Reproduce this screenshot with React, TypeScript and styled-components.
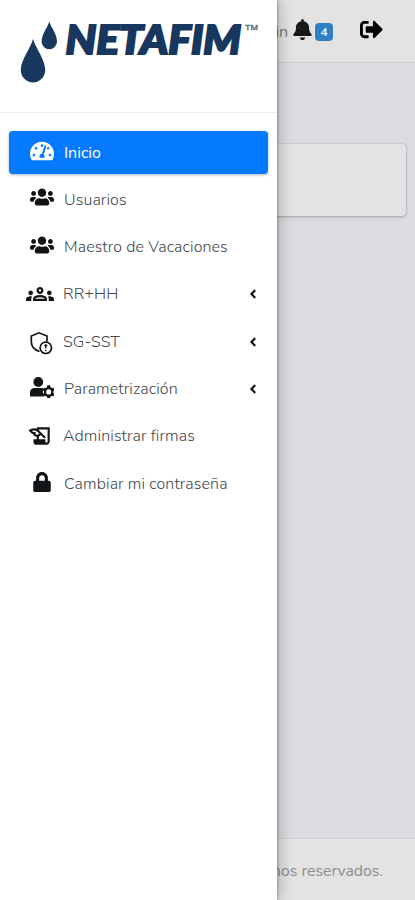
import React from 'react';
import styled, { createGlobalStyle } from 'styled-components';
import { FaTachometerAlt, FaUsers, FaLock, FaBell, FaSignOutAlt, FaAngleLeft } from 'react-icons/fa';
import { MdOutlineGroups, MdOutlineHistoryEdu } from 'react-icons/md';

const GlobalStyle = createGlobalStyle`
  * { box-sizing: border-box; }
  body { margin: 0; background: #dadce0; font-family: Nunito, "Open Sans", sans-serif; }
`;

const Page = styled.div`
  position: relative;
  height: 900px;
  overflow: hidden;
  display: flex;
  flex-direction: column;
  background: #dadce0;
`;

const TopBar = styled.header`
  height: 63px;
  flex: none;
  display: flex;
  justify-content: flex-end;
  padding: 0 32px 0 0;
  background: #e3e3e3;
  border-bottom: 1px solid #ced0d3;
`;

const UserName = styled.span`
  font-size: 16px;
  line-height: 20px;
  margin: 22px 4px 0 0;
  color: #777;
`;

const BellSlot = styled.span`
  display: flex;
  margin: 19px 2px 0 0;
  color: #161a1d;
`;

const CountBadge = styled.span`
  width: 18px;
  height: 18px;
  margin: 23px 27px 0 0;
  border-radius: 4px;
  background: #2e80c5;
  color: #e6f0f8;
  font-size: 12px;
  font-weight: 700;
  line-height: 18px;
  text-align: center;
`;

const ExitSlot = styled.span`
  display: flex;
  margin-top: 18px;
  color: #000;
`;

const Main = styled.main`
  flex: 1;
  padding: 81px 9px 0;
`;

const Panel = styled.section`
  height: 72px;
  border-radius: 4px;
  background: #e3e3e3;
  box-shadow: 0 0 1px rgba(0, 0, 0, 0.3), 0 1px 3px rgba(0, 0, 0, 0.25);
`;

const Footer = styled.footer`
  height: 62px;
  flex: none;
  display: flex;
  align-items: center;
  justify-content: flex-end;
  padding: 2px 32px 0 0;
  background: #e3e3e3;
  border-top: 1px solid #d0d2d5;
  color: #8b8e91;
  font-size: 15.8px;
  white-space: nowrap;
`;

const Drawer = styled.aside`
  position: absolute;
  top: 0;
  left: 0;
  width: 277px;
  height: 100%;
  background: #fff;
  box-shadow: 0 0 3px rgba(0, 0, 0, 0.4), 2px 0 14px rgba(0, 0, 0, 0.25);
`;

const Brand = styled.div`
  height: 113px;
  border-bottom: 1px solid #eceef0;
`;

const Menu = styled.nav`
  display: flex;
  flex-direction: column;
  gap: 4.3px;
  padding: 18px 9px 0;
`;

const MenuItem = styled.a<{ $active?: boolean }>`
  display: flex;
  align-items: center;
  height: 43px;
  padding: 0 8px 0 17px;
  border-radius: 4px;
  color: ${(p) => (p.$active ? '#fff' : '#101416')};
  background: ${(p) => (p.$active ? '#057aff' : 'transparent')};
  box-shadow: ${(p) => (p.$active ? '0 1px 3px rgba(0, 0, 0, 0.3)' : 'none')};
`;

const IconSlot = styled.span<{ $lift: number; $nudge: number }>`
  width: 32px;
  display: flex;
  justify-content: center;
  margin: ${(p) => -p.$lift}px ${(p) => 6 - p.$nudge}px 0 ${(p) => p.$nudge}px;
`;

const Label = styled.span<{ $active?: boolean; $shift: number }>`
  flex: 1;
  margin-left: ${(p) => p.$shift}px;
  font-size: 16px;
  font-weight: ${(p) => (p.$active ? 400 : 300)};
  letter-spacing: ${(p) => (p.$active ? 0 : 0.1)}px;
  line-height: 22px;
  white-space: nowrap;
  color: ${(p) => (p.$active ? '#fff' : '#42474b')};
`;

const ShieldAlertIcon = ({ size }: { size: number }) => (
  <svg width={size} height={size} viewBox="0 0 24 24" fill="none" stroke="currentColor" strokeWidth="1.700">
    <path d="M10.500 20.500C5.500 19 2.300 15 2.300 10.500V5L10 1.800L18 5V10.500" />
    <circle cx="16.800" cy="16.800" r="5.700" />
    <path d="M16.800 13.300V17.400M16.800 18.800V20.200M15.300 14.500H18.300" strokeWidth="1.300" />
  </svg>
);

const UserGearIcon = ({ size }: { size: number }) => (
  <svg width={size} height={size} viewBox="0 0 24 24" fill="currentColor">
    <circle cx="8.300" cy="7" r="4.900" />
    <path d="M0 21.500V18Q0 13 5 13H11.500Q13 13 13.500 14L12.700 17L14 21.500Z" />
    <path fillRule="evenodd" d="M17.400 10.300H20L20.600 12.300L22 13L23.500 12.700L24.500 15L23.300 16.400V17.800L24.500 19.200L23.300 21.300L21.600 20.900L20.500 21.600L20 23H17.400L16.800 21.500L15.600 20.900L14 21.300L12.800 19.200L14 17.700V16.400L12.800 15L14 12.800L15.600 13.100L16.800 12.400ZM18.700 14.300A2.500 2.600 0 1 0 18.700 19.500A2.500 2.600 0 1 0 18.700 14.300Z" />
  </svg>
);

type Entry = {
  label: string;
  icon: React.ComponentType<{ size: number }>;
  size: number;
  lift?: number;
  nudge?: number;
  shift?: number;
  active?: boolean;
  nested?: boolean;
};

const entries: Entry[] = [
  { label: 'Inicio', icon: FaTachometerAlt, size: 24, lift: 3, active: true },
  { label: 'Usuarios', icon: FaUsers, size: 24, lift: 5 },
  { label: 'Maestro de Vacaciones', icon: FaUsers, size: 24, lift: 5 },
  { label: 'RR+HH', icon: MdOutlineGroups, size: 28, lift: 0, nudge: -2, shift: -1, nested: true },
  { label: 'SG-SST', icon: ShieldAlertIcon, size: 24, lift: -2, nudge: -1, shift: -1, nested: true },
  { label: 'Parametrización', icon: UserGearIcon, size: 24, lift: 4, nested: true },
  { label: 'Administrar firmas', icon: MdOutlineHistoryEdu, size: 26, lift: 0, nudge: -2, shift: -1 },
  { label: 'Cambiar mi contraseña', icon: FaLock, size: 20, lift: 4 },
];

const Logo = () => (
  <svg width="277" height="112" viewBox="0 0 277 112" role="img" aria-label="Netafim">
    <g fill="#17375f">
      <path d="M49.2 21.5C51.5 28 57 34.500 57 41.500A7.700 7.700 0 0 1 41.600 41.500C41.600 34.500 47.500 28 49.200 21.500Z" />
      <path d="M33 39C36 49 45.200 59.500 45.200 70A12.200 12.500 0 0 1 20.800 70C20.800 59.500 30.500 49 33 39Z" />
    </g>
    <text x="65.500" y="54" fill="#17375f" stroke="#17375f" strokeWidth="2.100" fontFamily="Lato, sans-serif" fontWeight="900" fontStyle="italic" fontSize="39.500" fontKerning="none" textLength="175.500" lengthAdjust="spacingAndGlyphs">NETAFIM</text>
    <text x="245" y="29.500" fill="#4c5d78" stroke="#4c5d78" strokeWidth="0.300" fontFamily="Liberation Sans, sans-serif" fontSize="8" textLength="13" lengthAdjust="spacingAndGlyphs">TM</text>
  </svg>
);

export default function App() {
  return (
    <>
      <GlobalStyle />
      <Page>
        <TopBar>
          <UserName>Admin</UserName>
          <BellSlot><FaBell size={21} /></BellSlot>
          <CountBadge>4</CountBadge>
          <ExitSlot><FaSignOutAlt size={23} /></ExitSlot>
        </TopBar>
        <Main><Panel /></Main>
        <Footer>Todos los derechos reservados.</Footer>
        <Drawer>
          <Brand><Logo /></Brand>
          <Menu>
            {entries.map(({ label, icon: Icon, size, lift = 0, nudge = 0, shift = 0, active, nested }) => (
              <MenuItem key={label} $active={active}>
                <IconSlot $lift={lift} $nudge={nudge}><Icon size={size} /></IconSlot>
                <Label $active={active} $shift={shift}>{label}</Label>
                {nested && <FaAngleLeft size={14} />}
              </MenuItem>
            ))}
          </Menu>
        </Drawer>
      </Page>
    </>
  );
}
